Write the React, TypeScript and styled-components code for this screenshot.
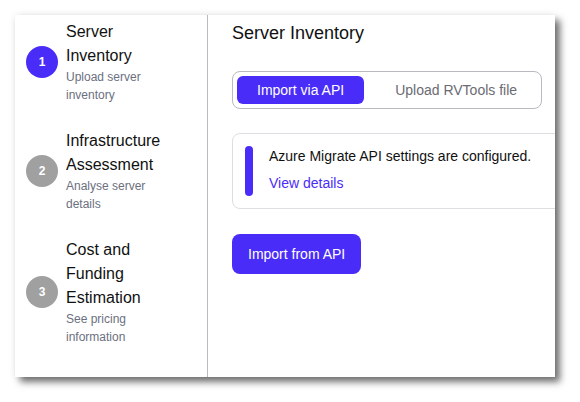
import styled, { createGlobalStyle } from 'styled-components';

const GlobalStyle = createGlobalStyle`
  body {
    margin: 0;
    background: #ffffff;
    font-family: 'Liberation Sans', Arial, sans-serif;
  }
`;

const ACCENT = '#4a2cf8';

const Page = styled.div`
  padding: 15px;
`;

const Window = styled.div`
  width: 540px;
  height: 362px;
  display: flex;
  overflow: hidden;
  background: #ffffff;
  box-shadow: 5px 5px 7px rgba(0, 0, 0, 0.55), 0 0 8px rgba(0, 0, 0, 0.08);
`;

const Sidebar = styled.nav`
  width: 193px;
  flex-shrink: 0;
  border-right: 1px solid #b9b9c2;
  padding: 5px 0 0 11px;
  box-sizing: border-box;
  display: flex;
  flex-direction: column;
  gap: 25px;
`;

const Step = styled.div`
  display: flex;
  align-items: center;
  gap: 8px;
`;

const Badge = styled.div<{ $active?: boolean }>`
  width: 32px;
  height: 32px;
  border-radius: 50%;
  flex-shrink: 0;
  display: flex;
  align-items: center;
  justify-content: center;
  background: ${(p) => (p.$active ? ACCENT : '#a0a0a0')};
  color: #ffffff;
  font-size: 12px;
  font-weight: 700;
`;

const StepText = styled.div`
  width: 112px;
`;

const StepTitle = styled.div`
  font-size: 16px;
  line-height: 24px;
  color: #111111;
`;

const StepSub = styled.div`
  font-size: 12px;
  line-height: 18px;
  color: #6b7080;
`;

const Main = styled.main`
  flex: 1;
  padding: 6px 0 0 24px;
  display: flex;
  flex-direction: column;
  align-items: flex-start;
`;

const Heading = styled.h1`
  margin: 0 0 26px;
  font-size: 18px;
  line-height: 24px;
  font-weight: 400;
  color: #111111;
`;

const Tabs = styled.div`
  display: flex;
  gap: 11px;
  padding: 4px;
  border: 1px solid #b9b9c2;
  border-radius: 8px;
`;

const Tab = styled.div<{ $active?: boolean }>`
  height: 28px;
  padding: 0 20px;
  display: flex;
  align-items: center;
  border-radius: 6px;
  font-size: 14px;
  background: ${(p) => (p.$active ? ACCENT : 'transparent')};
  color: ${(p) => (p.$active ? '#ffffff' : '#6b6b74')};
`;

const Card = styled.div`
  margin-top: 24px;
  width: 360px;
  flex-shrink: 0;
  box-sizing: border-box;
  border: 1px solid #dedee2;
  border-radius: 8px;
  padding: 12px;
  display: flex;
  gap: 16px;
`;

const Bar = styled.div`
  width: 8px;
  height: 50px;
  border-radius: 4px;
  background: ${ACCENT};
`;

const CardText = styled.div`
  font-size: 14px;
  line-height: 20px;
  color: #111111;
`;

const Link = styled.a`
  display: block;
  margin-top: 7px;
  color: ${ACCENT};
  text-decoration: none;
`;

const PrimaryButton = styled.button`
  margin-top: 25px;
  height: 40px;
  padding: 0 16px;
  border: none;
  border-radius: 8px;
  background: ${ACCENT};
  color: #ffffff;
  font-family: inherit;
  font-size: 14px;
`;

const steps = [
  { n: 1, title: 'Server Inventory', sub: 'Upload server inventory', active: true },
  { n: 2, title: 'Infrastructure Assessment', sub: 'Analyse server details' },
  { n: 3, title: 'Cost and Funding Estimation', sub: 'See pricing information' },
];

const App = () => {
  return (
    <Page>
      <GlobalStyle />
      <Window>
        <Sidebar>
          {steps.map((s) => (
            <Step key={s.n}>
              <Badge $active={s.active}>{s.n}</Badge>
              <StepText>
                <StepTitle>{s.title}</StepTitle>
                <StepSub>{s.sub}</StepSub>
              </StepText>
            </Step>
          ))}
        </Sidebar>
        <Main>
          <Heading>Server Inventory</Heading>
          <Tabs>
            <Tab $active>Import via API</Tab>
            <Tab>Upload RVTools file</Tab>
          </Tabs>
          <Card>
            <Bar />
            <CardText>
              Azure Migrate API settings are configured.
              <Link href="#">View details</Link>
            </CardText>
          </Card>
          <PrimaryButton>Import from API</PrimaryButton>
        </Main>
      </Window>
    </Page>
  );
};

export default App;
